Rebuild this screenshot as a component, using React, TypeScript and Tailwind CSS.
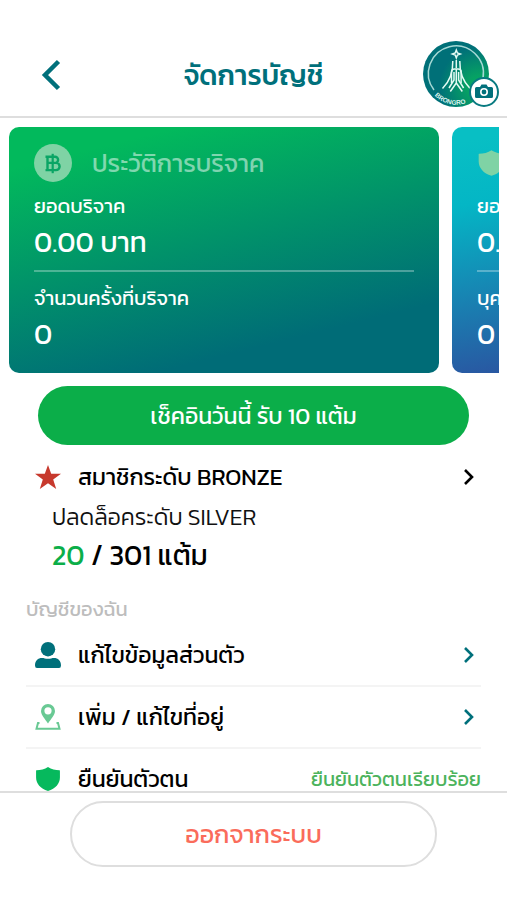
import type { ReactNode } from "react";

const fontStack = "font-['Kanit','Prompt','Noto_Sans_Thai','Noto_Sans',sans-serif]";

function Chevron({ className }: { className: string }) {
  return (
    <svg viewBox="0 0 12 18" className={className} fill="none" stroke="currentColor" strokeWidth="2.6" aria-hidden="true">
      <path d="M2 2l7 7-7 7" />
    </svg>
  );
}

function Shield({ className }: { className: string }) {
  return (
    <svg viewBox="0 0 24 24" className={className} fill="currentColor" aria-hidden="true">
      <path d="M12 1C9 3 5 4 1.500 4 1 4 1 4.500 1 5v5.500C1 16 5 21 12 23c7-2 11-7 11-12.500V5c0-.5 0-1-.5-1C19 4 15 3 12 1z" />
    </svg>
  );
}

function BahtBadge() {
  return (
    <svg viewBox="0 0 38 38" className="size-[38px] shrink-0" aria-hidden="true">
      <circle cx="19" cy="19" r="19" fill="#7fd3a5" />
      <g fill="none" stroke="#0aa565" strokeWidth="2.400">
        <path d="M11.500 12.700H21a3.100 3.100 0 0 1 0 6.200h-6.500H22a3.600 3.600 0 0 1 0 7.200H11.500M13.500 12.700v13.400" />
        <path d="M18.700 9.800v19.400" strokeWidth="2.200" />
      </g>
    </svg>
  );
}

function StatCard({ icon, title, firstLabel, firstValue, secondLabel, secondValue, className }: {
  icon: ReactNode;
  title: string;
  firstLabel: string;
  firstValue: string;
  secondLabel: string;
  secondValue: string;
  className: string;
}) {
  return (
    <article className={`w-[430px] shrink-0 rounded-[10px] px-[25px] pt-[17px] pb-[19px] text-white ${className}`}>
      <div className="flex h-[38px] items-center gap-5">
        {icon}
        <h2 className="text-[25px] leading-8 whitespace-nowrap text-white/50">{title}</h2>
      </div>
      <p className="mt-2 text-xl leading-8 whitespace-nowrap">{firstLabel}</p>
      <p className="text-[28px] leading-10 whitespace-nowrap">{firstValue}</p>
      <hr className="mt-2 mb-2.5 border-t-2 border-white/30" />
      <p className="text-xl leading-8 whitespace-nowrap">{secondLabel}</p>
      <p className="text-[28px] leading-10 whitespace-nowrap">{secondValue}</p>
    </article>
  );
}

function Avatar() {
  return (
    <svg viewBox="0 0 76 68" className="h-[68px] w-[76px]" role="img" aria-label="โปรไฟล์">
      <defs>
        <radialGradient id="avatar" gradientUnits="userSpaceOnUse" cx="56" cy="46" r="40">
          <stop offset="0" stopColor="#04ad60" />
          <stop offset="0.300" stopColor="#06a064" />
          <stop offset="1" stopColor="#007078" />
        </radialGradient>
        <path id="ring" d="M11.500 54.500A30.400 30.400 0 0 0 60 48" />
      </defs>
      <circle cx="33" cy="33" r="33" fill="url(#avatar)" />
      <path d="M11 49A27.500 27.500 0 1 1 60 37" fill="none" stroke="#a5d9d5" strokeWidth="1.500" />
      <g fill="none" stroke="#e4fbf4" strokeWidth="1.500">
        <path d="M33.300 9l1.100 2.900 2.900 1.100-2.900 1.100-1.100 2.900-1.100-2.900-2.900-1.100 2.900-1.100z" />
        <path d="M29.800 20c.3 12-2.800 20-10.300 27.500M36.800 20c-.3 12 2.800 20 10.300 27.500" />
        <path d="M33.300 19v8M28.500 42V31q0-3 3-3h3.600q3 0 3 3v11" />
        <path d="M33.300 28v15M31 31v8l-5 8M35.600 31v8l5 8M33.300 42l-6 8.500M33.300 42l6 8.500" />
      </g>
      <text fill="#dff5f0" fontSize="6.500" fontWeight="700" fontFamily="Liberation Sans, sans-serif">
        <textPath href="#ring">BRONGRO</textPath>
      </text>
      <circle cx="61" cy="51" r="14" fill="#fff" stroke="#087a80" strokeWidth="2" />
      <path d="M53.500 46H57l1.500-2.500h5L65 46h3.500a1.500 1.500 0 0 1 1.500 1.500v8a1.500 1.500 0 0 1-1.500 1.500h-15a1.500 1.500 0 0 1-1.500-1.500v-8a1.500 1.500 0 0 1 1.500-1.500z" fill="#00707b" />
      <circle cx="61" cy="51" r="3.200" fill="#00707b" stroke="#fff" strokeWidth="1.600" />
    </svg>
  );
}

function PersonIcon() {
  return (
    <svg viewBox="0 0 26 26" className="size-[26px]" fill="#00707b" aria-hidden="true">
      <circle cx="13" cy="7.200" r="7.200" />
      <path d="M2 26q-2 0-2-2.500C0 18.500 3 16 7 16c2.200 0 3.200.8 6 .8s3.800-.8 6-.8c4 0 7 2.500 7 7.500Q26 26 24 26z" />
    </svg>
  );
}

function PlaceIcon() {
  return (
    <svg viewBox="0 0 26 26" className="size-[26px]" aria-hidden="true">
      <path fillRule="evenodd" fill="#69c994" d="M13 0a7 7 0 0 0-7 7c0 4 4 8 7 12.500C16 15 20 11 20 7a7 7 0 0 0-7-7zm0 3.200a3.600 3.600 0 1 1 0 7.200 3.600 3.600 0 0 1 0-7.200z" />
      <path d="M4.500 19H3L1.500 24.800h23L23 19h-1.500" fill="none" stroke="#69c994" strokeWidth="2" />
    </svg>
  );
}

function MenuRow({ icon, label, trailing }: { icon: ReactNode; label: string; trailing: ReactNode }) {
  return (
    <li className="border-b-2 border-[#f4f4f4]">
      <a href="#" className="flex h-[60px] items-center pl-[9px]">
        <span className="flex w-[43px] shrink-0">{icon}</span>
        <span className="flex-1 text-[23px] leading-8 whitespace-nowrap text-black">{label}</span>
        {trailing}
      </a>
    </li>
  );
}

export default function App() {
  return (
    <div className={`flex h-screen flex-col bg-white text-black ${fontStack}`}>
      <header className="grid h-[118px] shrink-0 grid-cols-[1fr_auto_1fr] items-center border-b-2 border-[#dedede] px-2 pt-[34px]">
        <button type="button" aria-label="ย้อนกลับ" className="justify-self-start pl-8 text-[#00707b]">
          <svg viewBox="0 0 22 32" className="h-8 w-[22px]" fill="none" stroke="currentColor" strokeWidth="4.500" aria-hidden="true">
            <path d="M18.500 2.500L5 16l13.500 13.500" />
          </svg>
        </button>
        <h1 className="text-[28px] leading-10 font-medium text-[#00707b]">จัดการบัญชี</h1>
        <button type="button" className="justify-self-end"><Avatar /></button>
      </header>

      <main className="min-h-0 flex-1 overflow-hidden">
        <section className="mx-2 flex gap-[13px] overflow-hidden pt-[9px] pl-px">
          <StatCard
            className="bg-[linear-gradient(166deg,#02b95c_12%,#006c77_80%)]"
            icon={<BahtBadge />}
            title="ประวัติการบริจาค"
            firstLabel="ยอดบริจาค"
            firstValue="0.00 บาท"
            secondLabel="จำนวนครั้งที่บริจาค"
            secondValue="0"
          />
          <StatCard
            className="bg-[linear-gradient(170deg,#08bfc4_5%,#04b6c5_25%,#2b52a0_82%)]"
            icon={<Shield className="h-7 w-[29px] shrink-0 text-[#7fd3a5]" />}
            title="ประวัติการแนะนำ"
            firstLabel="ยอดบริจาค"
            firstValue="0.00 บาท"
            secondLabel="บุคคลที่แนะนำ"
            secondValue="0"
          />
        </section>

        <div className="px-[38px] pt-[13px]">
          <button type="button" className="h-[59px] w-full rounded-full bg-[#0bae49] text-[23px] leading-8 text-white">
            เช็คอินวันนี้ รับ 10 แต้ม
          </button>
        </div>

        <section className="mt-3 px-[26px]">
          <a href="#" className="flex h-10 items-center pl-[9px]">
            <span className="flex w-[43px] shrink-0">
              <svg viewBox="0 0 26 24" className="h-6 w-[26px]" fill="#c7392d" aria-hidden="true">
                <path d="M13 0l3.200 8.800H26l-7.800 5.600L21.200 24 13 18.200 4.800 24l3-9.600L0 8.800h9.800z" />
              </svg>
            </span>
            <span className="flex-1 text-[23px] leading-8">สมาชิกระดับ BRONZE</span>
            <Chevron className="mr-1.5 h-[18px] w-3 text-black" />
          </a>
          <p className="pl-[26px] text-[23px] leading-10 font-light text-[#111111]">ปลดล็อคระดับ SILVER</p>
          <p className="pl-[26px] text-[28px] leading-9"><span className="text-[#0bae49]">20</span> / 301 แต้ม</p>
        </section>

        <section className="px-[26px] pt-5">
          <h2 className="text-xl leading-8 text-[#bdbdbd]">บัญชีของฉัน</h2>
          <ul>
            <MenuRow icon={<PersonIcon />} label="แก้ไขข้อมูลส่วนตัว" trailing={<Chevron className="mr-1.5 h-[18px] w-3 text-[#00707b]" />} />
            <MenuRow icon={<PlaceIcon />} label="เพิ่ม / แก้ไขที่อยู่" trailing={<Chevron className="mr-1.5 h-[18px] w-3 text-[#00707b]" />} />
            <MenuRow
              icon={<Shield className="size-[26px] text-[#06b95d]" />}
              label="ยืนยันตัวตน"
              trailing={<span className="text-xl leading-8 whitespace-nowrap text-[#4cb35c]">ยืนยันตัวตนเรียบร้อย</span>}
            />
          </ul>
        </section>
      </main>

      <footer className="h-[109px] shrink-0 border-t-2 border-[#dedede] bg-white px-[70px] pt-2">
        <button type="button" className="h-[66px] w-full rounded-full border-2 border-[#dedede] text-[25px] leading-8 text-[#fa6c5b]">
          ออกจากระบบ
        </button>
      </footer>
    </div>
  );
}
